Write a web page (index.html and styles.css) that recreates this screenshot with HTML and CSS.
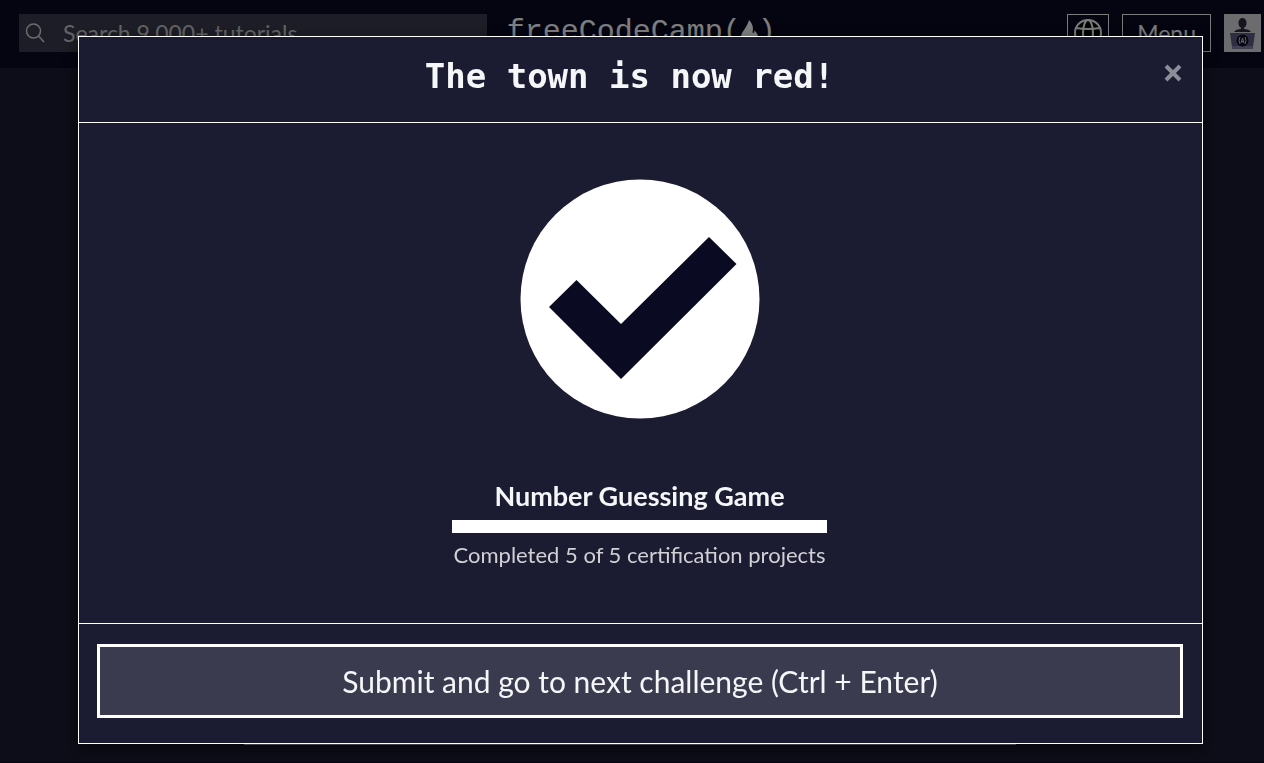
FILE: index.html
```html
<!DOCTYPE html>
<html lang="en">
<head>
<meta charset="utf-8">
<meta name="viewport" content="width=device-width, initial-scale=1">
<title>Number Guessing Game | freeCodeCamp.org</title>
<link rel="stylesheet" href="styles.css">
</head>
<body>
<header class="site-header">
  <form class="search" role="search">
    <svg class="search-icon" viewBox="0 0 20 20" aria-hidden="true"><circle cx="8.500" cy="8" r="7"/><path d="M13.500 13l5.500 6"/></svg>
    <input class="search-input" type="search" aria-label="Search" placeholder="Search 9,000+ tutorials">
  </form>
  <a class="logo" href="#"><span>freeCodeCamp(</span><svg class="flame" viewBox="0 0 17 26" aria-hidden="true"><path d="M8 0c2 2 4 5 4 9 0 2-1 3 0 4 1 0 2-1 1-3 2 2 4 4 4 7 0 4-3 7-6 9 2-3 2-5 0-8-1 2-2 2-3 0-1 3-3 5-1 8-4-2-7-5-7-9C0 12 6 8 8 0z"/></svg><span>)</span></a>
  <nav class="actions" aria-label="Main">
    <button class="nav-button globe-button" type="button" aria-label="Language">
      <svg class="globe" viewBox="0 0 28 28" aria-hidden="true"><circle cx="14" cy="14" r="13"/><ellipse cx="14" cy="14" rx="5" ry="13"/><path d="M2 9q12 2 24 0M2 19q12-2 24 0"/></svg>
    </button>
    <button class="nav-button menu-button" type="button">Menu</button>
    <a class="avatar" href="#" aria-label="Profile">
      <svg viewBox="0 0 37 38" aria-hidden="true">
        <path class="avatar-body" d="M18.500 4c2.500 0 4 2 4 5s-1.500 5-4 5-4-2-4-5 1.500-5 4-5zM17 14h3v1c3 0 6 1 7 3H10c1-2 4-3 7-3z"/>
        <path class="laptop" d="M6 19h25l-2 14H8z"/><path class="laptop-base" d="M8 32h21v3H8z"/>
        <circle class="badge" cx="18.500" cy="26.500" r="6"/>
        <path class="badge-mark" d="M16 23q-2 3.500 0 7M21 23q2 3.500 0 7M17 29l1.500-5 1.500 5M17.500 27.500h2"/>
      </svg>
    </a>
  </nav>
</header>
<main class="page"><section class="challenge"></section></main>
<footer class="site-footer"></footer>

<div class="overlay">
  <div class="modal" role="dialog" aria-modal="true" aria-labelledby="modal-title">
    <div class="modal-header">
      <h1 class="modal-title" id="modal-title">The town is now red!</h1>
      <button class="close" type="button" aria-label="Close"><svg viewBox="0 0 18 18" aria-hidden="true"><path d="M2 2l14 14M16 2L2 16"/></svg></button>
    </div>
    <div class="modal-body">
      <svg class="check" viewBox="0 0 240 240" aria-hidden="true"><circle cx="120" cy="120" r="119.500"/><path d="M29 128l27.500-27 44.500 44 88-87 27.500 27L101 200z"/></svg>
      <div class="progress">
        <h2 class="project">Number Guessing Game</h2>
        <div class="bar" role="progressbar" aria-label="Certification projects" aria-valuemin="0" aria-valuemax="5" aria-valuenow="5"><div class="bar-fill" style="width:100%"></div></div>
        <p class="progress-text">Completed 5 of 5 certification projects</p>
      </div>
    </div>
    <div class="modal-footer">
      <button class="submit" type="button">Submit and go to next challenge (Ctrl + Enter)</button>
    </div>
  </div>
</div>
</body>
</html>
```
FILE: styles.css
```css
* { box-sizing: border-box; }
body {
  margin: 0;
  min-height: 100vh;
  display: flex;
  flex-direction: column;
  background: #1b1b32;
  color: #f5f6f7;
  font-family: Lato, sans-serif;
}
svg { display: block; }
button { font-family: inherit; cursor: pointer; }

.site-header {
  display: flex;
  align-items: flex-start;
  padding: 14px 3px 16px 19px;
  background: #0a0a23;
}
.search {
  display: flex;
  align-items: center;
  width: 37vw;
  height: 38px;
  padding-left: 6px;
  background: #3b3b4f;
}
.search-icon {
  flex: none;
  width: 20px;
  height: 20px;
  fill: none;
  stroke: #d8d8d8;
  stroke-width: 1.5;
}
.search-input {
  flex: 1;
  min-width: 0;
  height: 38px;
  margin-left: 18px;
  padding: 0;
  border: 0;
  background: none;
  color: #f5f6f7;
  font-family: inherit;
  font-size: 23px;
}
.search-input::placeholder { color: #c8c8c8; opacity: 1; }
.logo {
  display: flex;
  align-items: center;
  height: 36px;
  margin-left: 20px;
  color: #fff;
  font-family: "Liberation Mono", monospace;
  font-size: 30px;
  text-decoration: none;
}
.flame { width: 17px; height: 26px; margin-top: 2px; fill: #fff; }
.actions { display: flex; gap: 13px; margin-left: auto; }
.nav-button {
  height: 38px;
  border: 1px solid #f5f6f7;
  background: #0a0a23;
  color: #f5f6f7;
}
.globe-button { width: 42px; padding: 0 6px; }
.globe { width: 28px; height: 28px; fill: #000; stroke: #f5f6f7; stroke-width: 2; }
.globe ellipse, .globe path { fill: none; }
.menu-button { padding: 0 14px; font-size: 23px; }
.avatar { width: 37px; height: 38px; background: #d8d8dc; }
.avatar-body { fill: #2a2a40; }
.laptop { fill: #5c5c86; }
.laptop-base { fill: #8080a4; }
.badge { fill: #0a0a23; }
.badge-mark { fill: none; stroke: #d0d0d5; }

.page { flex: 1; display: flex; justify-content: center; padding: 0 4px 17px 0; }
.challenge { width: 61vw; border-bottom: 1px solid #d0d0d5; }
.site-footer { height: 1px; background: #0a0a23; }

.overlay {
  position: fixed;
  inset: 0;
  overflow: auto;
  padding: 36px 61px 19px 78px;
  background: rgba(0, 0, 0, 0.5);
}
.modal {
  border: 1px solid #fff;
  background: #1b1b32;
  box-shadow: 0 5px 15px rgba(0, 0, 0, 0.5);
}
.modal-header {
  display: flex;
  align-items: flex-start;
  padding: 15px 20px 22px 16px;
  border-bottom: 1px solid #fff;
}
.modal-title {
  flex: 1;
  margin: 0;
  font-family: "DejaVu Sans Mono", monospace;
  font-size: 34px;
  line-height: 48px;
  text-align: center;
}
.close { margin-top: 12px; padding: 0; border: 0; background: none; }
.close svg { width: 18px; height: 18px; fill: none; stroke: #8d8d9a; stroke-width: 4; }
.modal-body {
  display: flex;
  flex-direction: column;
  align-items: center;
  padding: 56px 20px 51px 18px;
}
.check { width: 240px; height: 240px; }
.check circle { fill: #fff; }
.check path { fill: #0a0a23; }
.progress { margin-top: 59px; text-align: center; }
.project { margin: 0; font-size: 27px; line-height: 36px; }
.bar { height: 13px; margin: 6px 0 4px; background: #3b3b4f; }
.bar-fill { height: 100%; background: #fff; }
.progress-text { margin: 0; padding: 0 2px; color: #d0d0d5; font-size: 22px; line-height: 35px; }
.modal-footer { padding: 20px 19px 25px 18px; border-top: 1px solid #fff; }
.submit {
  width: 100%;
  padding: 12px;
  border: 3px solid #fff;
  background: #3b3b4f;
  color: #f5f6f7;
  font-size: 30px;
  line-height: 44px;
}
```
